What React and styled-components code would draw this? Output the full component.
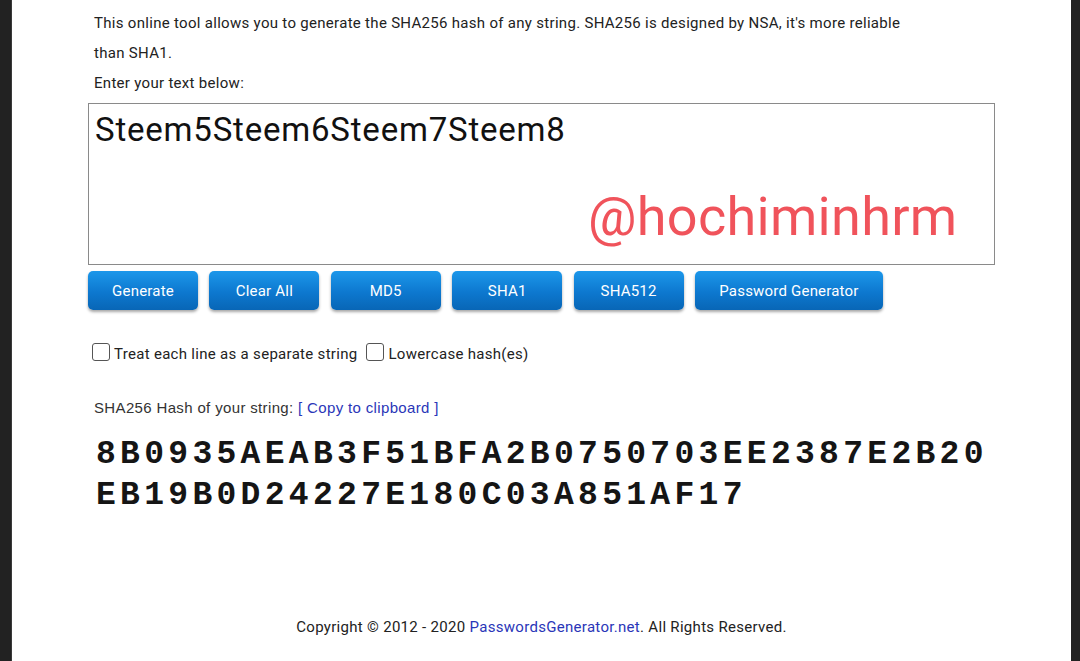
import React from "react";
import styled, { createGlobalStyle } from "styled-components";

const Global = createGlobalStyle`
  html, body { margin: 0; padding: 0; background: #222222; }
  body { font-family: Roboto, "Liberation Sans", Arial, sans-serif; }
  * { box-sizing: border-box; }
`;

const Frame = styled.div`
  display: flex;
  height: 661px;
  padding: 0 9px 0 11px;
  background: #222222;
`;

const Page = styled.main`
  flex: 1;
  background: #ffffff;
  border-left: 1px solid #3a3a3a;
  padding: 8px 0 0 76px;
  display: flex;
  flex-direction: column;
`;

const Para = styled.p`
  margin: 0;
  padding-left: 6px;
  width: 830px;
  font-size: 15px;
  line-height: 30px;
  letter-spacing: 0.3px;
  color: #222;
`;

const InputBox = styled.div`
  position: relative;
  margin-top: 5px;
  width: 907px;
  height: 162px;
  border: 1px solid #8a8a8a;
  padding: 6px 6px;
`;

const InputText = styled.div`
  font-size: 33px;
  line-height: 40px;
  color: #111;
  letter-spacing: 0.8px;
`;

const Watermark = styled.div`
  position: absolute;
  left: 499px;
  top: 80px;
  font-size: 54px;
  line-height: 66px;
  color: #f0535b;
  letter-spacing: 0.3px;
`;

const Toolbar = styled.div`
  display: flex;
  gap: 11.4px;
  margin-top: 6px;
`;

const Btn = styled.button`
  width: ${(p) => (p.$wide ? "188px" : "110px")};
  height: 39px;
  border: none;
  border-radius: 5px;
  background: linear-gradient(#1c97ea, #0d78cf 55%, #0866b6);
  color: #fff;
  font-family: Roboto, "Liberation Sans", Arial, sans-serif;
  font-size: 15px;
  letter-spacing: 0.2px;
  box-shadow: 0 2px 3px rgba(0, 0, 0, 0.35);
  padding: 0;
`;

const Options = styled.div`
  display: flex;
  align-items: center;
  margin-top: 35px;
  padding-left: 4px;
  font-size: 15px;
  letter-spacing: 0.3px;
  color: #222;
  gap: 9px;
`;

const Opt = styled.label`
  display: flex;
  align-items: center;
  gap: 4px;
`;

const Box = styled.span`
  display: inline-block;
  width: 18px;
  height: 18px;
  border: 1.5px solid #555;
  border-radius: 3px;
  margin-top: -4px;
`;

const HashLabel = styled.div`
  margin-top: 36px;
  padding-left: 6px;
  font-size: 15px;
  letter-spacing: 0.35px;
  color: #333;
  font-family: "Liberation Sans", Arial, sans-serif;
`;

const Link = styled.span`
  color: #2a36b8;
`;

const Hash = styled.div`
  margin-top: 18px;
  padding-left: 8px;
  font-family: "Liberation Mono", "Courier New", monospace;
  font-weight: bold;
  font-size: 33px;
  letter-spacing: 4.3px;
  line-height: 41px;
  color: #151515;
  width: 905px;
  word-break: break-all;
`;

const Footer = styled.footer`
  margin-top: auto;
  margin-bottom: 25px;
  margin-left: -76px;
  text-align: center;
  font-size: 15px;
  letter-spacing: 0.3px;
  color: #222;
`;

export default function App() {
  return (
    <>
      <Global />
      <Frame>
        <Page>
          <Para>
            This online tool allows you to generate the SHA256 hash of any string. SHA256 is designed by NSA, it's more reliable than SHA1.
          </Para>
          <Para>Enter your text below:</Para>
          <InputBox>
            <InputText>Steem5Steem6Steem7Steem8</InputText>
            <Watermark>@hochiminhrm</Watermark>
          </InputBox>
          <Toolbar>
            <Btn>Generate</Btn>
            <Btn>Clear All</Btn>
            <Btn>MD5</Btn>
            <Btn>SHA1</Btn>
            <Btn>SHA512</Btn>
            <Btn $wide>Password Generator</Btn>
          </Toolbar>
          <Options>
            <Opt><Box />Treat each line as a separate string</Opt>
            <Opt><Box />Lowercase hash(es)</Opt>
          </Options>
          <HashLabel>
            SHA256 Hash of your string: <Link>[ Copy to clipboard ]</Link>
          </HashLabel>
          <Hash>8B0935AEAB3F51BFA2B0750703EE2387E2B20EB19B0D24227E180C03A851AF17</Hash>
          <Footer>
            Copyright © 2012 - 2020 <Link>PasswordsGenerator.net</Link>. All Rights Reserved.
          </Footer>
        </Page>
      </Frame>
    </>
  );
}
